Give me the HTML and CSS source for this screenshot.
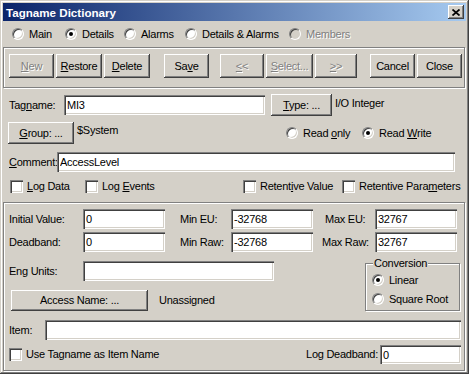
FILE: index.html
```html
<!DOCTYPE html>
<html lang="en">
<head>
    <meta charset="UTF-8">
    <meta name="viewport" content="width=device-width, initial-scale=1.0">
    <title>Tagname Dictionary</title>
    <link rel="stylesheet" href="styles.css">
</head>
<body>
<div class="window">
    <div class="titlebar">
        <span class="title">Tagname Dictionary</span>
        <span class="close-btn">
            <svg width="8" height="7" viewBox="0 0 8 7"><path d="M0.5 0.5L7.5 6.5M7.5 0.5L0.5 6.5" stroke="#000" stroke-width="1.7" fill="none"/></svg>
        </span>
    </div>

    <div class="tabs">
        <div class="opt tab-main"><span class="radio"></span><span>Main</span></div>
        <div class="opt tab-details"><span class="radio checked"></span><span>Details</span></div>
        <div class="opt tab-alarms"><span class="radio"></span><span>Alarms</span></div>
        <div class="opt tab-both"><span class="radio"></span><span>Details &amp; Alarms</span></div>
        <div class="opt disabled"><span class="radio off"></span><span>Members</span></div>
    </div>

    <div class="toolbar">
        <button class="btn w45" disabled><u>N</u>ew</button>
        <button class="btn w46"><u>R</u>estore</button>
        <button class="btn w46"><u>D</u>elete</button>
        <button class="btn w45 sep-save">Sa<u>v</u>e</button>
        <button class="btn w44 sep-nav" disabled><u>&lt;</u>&lt;</button>
        <button class="btn w47" disabled><u>S</u>elect...</button>
        <button class="btn w42" disabled><u>&gt;</u>&gt;</button>
        <button class="btn w45 sep-close">Cancel</button>
        <button class="btn w45">Close</button>
    </div>

    <div class="props">
        <div class="row row-tag">
            <span class="lbl lbl-tag">Tag<u>n</u>ame:</span>
            <input class="field f-tag" value="MI3">
            <button class="btn btn-type"><u>T</u>ype: ...</button>
            <span class="val val-type">I/O Integer</span>
        </div>
        <div class="row row-group">
            <button class="btn btn-group"><u>G</u>roup: ...</button>
            <span class="val val-group">$System</span>
            <div class="opt opt-ro"><span class="radio"></span><span>Read <u>o</u>nly</span></div>
            <div class="opt opt-rw"><span class="radio checked"></span><span>Read <u>W</u>rite</span></div>
        </div>
        <div class="row row-comment">
            <span class="lbl lbl-comment"><u>C</u>omment:</span>
            <input class="field f-comment" value="AccessLevel">
        </div>
        <div class="row row-checks">
            <div class="opt chk-logdata"><span class="check"></span><span><u>L</u>og Data</span></div>
            <div class="opt chk-logevents"><span class="check"></span><span>Log <u>E</u>vents</span></div>
            <div class="opt chk-retval"><span class="check"></span><span>Retent<u>i</u>ve Value</span></div>
            <div class="opt"><span class="check"></span><span>Retentive Para<u>m</u>eters</span></div>
        </div>
    </div>

    <div class="details">
        <div class="row">
            <span class="lbl c1">Initial Value:</span>
            <input class="field num" value="0">
            <span class="lbl c2">Min EU:</span>
            <input class="field num" value="-32768">
            <span class="lbl c3">Max EU:</span>
            <input class="field num" value="32767">
        </div>
        <div class="row row-second">
            <span class="lbl c1">Deadband:</span>
            <input class="field num" value="0">
            <span class="lbl c2">Min Raw:</span>
            <input class="field num" value="-32768">
            <span class="lbl c3 c3-raw">Max Raw:</span>
            <input class="field num" value="32767">
        </div>
        <div class="split">
            <div class="left-col">
                <div class="row">
                    <span class="lbl c1">Eng Units:</span>
                    <input class="field f-eng" value="">
                </div>
                <div class="row row-access">
                    <button class="btn btn-access">Access Name: ...</button>
                    <span class="val val-access">Unassigned</span>
                </div>
            </div>
            <fieldset class="conv">
                <legend>Conversion</legend>
                <div class="opt conv-opt"><span class="radio checked"></span><span>Linear</span></div>
                <div class="opt conv-opt"><span class="radio"></span><span>Square Root</span></div>
            </fieldset>
        </div>
        <div class="row row-item">
            <span class="lbl lbl-item">Item:</span>
            <input class="field f-item" value="">
        </div>
        <div class="row row-last">
            <div class="opt"><span class="check"></span><span>Use Tagname as Item Name</span></div>
            <span class="lbl lbl-logdb">Log Deadband:</span>
            <input class="field f-logdb" value="0">
        </div>
    </div>
</div>
</body>
</html>
```

FILE: styles.css
```css
* {
    box-sizing: border-box;
}
body {
    margin: 0;
    background: #d4d0c8;
    font-family: "Liberation Sans", Arial, sans-serif;
    font-size: 11px;
    letter-spacing: -0.25px;
    line-height: 13px;
    color: #000;
}
u {
    text-decoration: underline;
    text-underline-offset: 1px;
}

/* window frame */
.window {
    width: 469px;
    height: 374px;
    padding: 3px;
    background: #d4d0c8;
    box-shadow: inset -1px -1px #404040, inset 1px 1px #d4d0c8, inset -2px -2px #808080, inset 2px 2px #fff;
    display: flex;
    flex-direction: column;
}
.titlebar {
    height: 18px;
    flex-shrink: 0;
    display: flex;
    align-items: center;
    justify-content: space-between;
    padding: 0 2px 0 3px;
    background: linear-gradient(to right, #0a246a, #a6caf0);
}
.title {
    color: #fff;
    font-weight: bold;
    font-size: 11.6px;
    letter-spacing: 0;
}
.close-btn {
    width: 16px;
    height: 14px;
    display: flex;
    align-items: center;
    justify-content: center;
    background: #d4d0c8;
    box-shadow: inset -1px -1px #404040, inset 1px 1px #fff, inset -2px -2px #808080, inset 2px 2px #d4d0c8;
}

/* radios and checks */
.opt {
    display: flex;
    align-items: center;
    gap: 5px;
    white-space: nowrap;
}
.opt:has(.check) {
    gap: 4px;
}
.radio {
    width: 12px;
    height: 12px;
    flex-shrink: 0;
    border-radius: 50%;
    background: #fff;
    border: 1px solid;
    border-color: #808080 #fff #fff #808080;
    box-shadow: inset 1px 1px #404040, inset -1px -1px #d4d0c8;
    display: flex;
    align-items: center;
    justify-content: center;
}
.radio.checked::after {
    content: "";
    width: 4px;
    height: 4px;
    border-radius: 50%;
    background: #000;
}
.radio.off {
    background: #d4d0c8;
}
.check {
    width: 13px;
    height: 13px;
    flex-shrink: 0;
    background: #fff;
    box-shadow: inset 1px 1px #808080, inset 2px 2px #404040, inset -1px -1px #fff, inset -2px -2px #d4d0c8;
}
.disabled {
    color: #808080;
    text-shadow: 1px 1px #fff;
}

.tabs {
    height: 26px;
    flex-shrink: 0;
    display: flex;
    align-items: center;
    padding-left: 9px;
}
.tab-main { width: 53px; }
.tab-details { width: 59px; }
.tab-alarms { width: 61px; }
.tab-both { width: 104px; }

/* buttons */
.btn {
    height: 24px;
    padding: 0;
    border: none;
    background: #d4d0c8;
    font: inherit;
    letter-spacing: inherit;
    color: #000;
    text-align: center;
    box-shadow: inset -1px -1px #404040, inset 1px 1px #fff, inset -2px -2px #808080, inset 2px 2px #d4d0c8;
}
.btn:disabled {
    color: #808080;
    text-shadow: 1px 1px #fff;
}
.w42 { width: 42px; }
.w44 { width: 44px; }
.w45 { width: 45px; }
.w46 { width: 46px; }
.w47 { width: 47px; }

.toolbar {
    height: 41px;
    flex-shrink: 0;
    margin-right: 1px;
    border: 1px solid #808080;
    box-shadow: inset 1px 1px #fff, 1px 1px #fff;
    padding: 6px 0 0 5px;
    display: flex;
    gap: 2px;
}
.sep-save { margin-left: 12px; }
.sep-nav { margin-left: 9px; }
.sep-close { margin-left: 11px; }

/* fields */
.field {
    height: 20px;
    padding: 0 2px 0 3px;
    border: none;
    outline: none;
    background: #fff;
    font: inherit;
    letter-spacing: inherit;
    color: #000;
    box-shadow: inset 1px 1px #808080, inset 2px 2px #404040, inset -1px -1px #fff, inset -2px -2px #d4d0c8;
}
.row {
    display: flex;
    align-items: center;
}
.lbl {
    flex-shrink: 0;
    white-space: nowrap;
}
.val {
    white-space: nowrap;
}

/* upper properties */
.props {
    flex-shrink: 0;
    padding: 6px 0 9px 6px;
}
.row-tag { height: 22px; }
.lbl-tag { width: 55px; }
.f-tag { width: 201px; }
.btn-type {
    width: 61px;
    height: 22px;
    margin-left: 6px;
}
.val-type {
    align-self: flex-start;
    margin: 3px 0 0 3px;
}
.row-group {
    height: 22px;
    margin-top: 6px;
}
.btn-group {
    width: 66px;
    height: 22px;
    margin-left: -1px;
}
.val-group {
    align-self: flex-start;
    margin: 2px 0 0 3px;
}
.opt-ro {
    width: 76px;
    margin-left: auto;
}
.opt-rw { width: 104px; }
.row-comment {
    height: 20px;
    margin-top: 8px;
}
.lbl-comment { width: 48px; }
.f-comment { width: 398px; }
.row-checks {
    height: 14px;
    margin-top: 7px;
}
.chk-logdata {
    width: 75px;
    margin-left: 1px;
}
.chk-logevents { width: 158px; }
.chk-retval { width: 99px; }

/* lower details panel */
.details {
    flex: 1;
    margin-right: 1px;
    border: 1px solid #808080;
    box-shadow: inset 1px 1px #fff, 1px 1px #fff;
    padding: 6px 0 0 5px;
}
.details > .row {
    height: 20px;
}
.row-second { margin-top: 3px; }
.num { width: 82px; }
.c1 { width: 74px; }
.c2 {
    width: 66px;
    padding-left: 15px;
}
.c3 {
    width: 62px;
    padding-left: 12px;
}
.c3-raw { padding-left: 9px; }

.split {
    display: flex;
    margin-top: 5px;
}
.left-col {
    padding-top: 4px;
}
.left-col .row { height: 20px; }
.f-eng { width: 191px; }
.row-access {
    margin-top: 9px;
}
.left-col .row-access { height: 21px; }
.btn-access {
    width: 137px;
    height: 21px;
    margin-left: 2px;
}
.val-access { margin-left: 11px; }

.conv {
    width: 95px;
    margin: 0 4px 0 auto;
    padding: 0 6px 4px 6px;
    border: 1px solid #808080;
    box-shadow: inset 1px 1px #fff, 1px 1px #fff;
}
.conv legend {
    margin-left: 1px;
    padding: 0 1px;
    line-height: 13px;
    background: #d4d0c8;
}
.conv-opt {
    height: 14px;
    margin-top: 5px;
}
.conv-opt:first-of-type { margin-top: 3px; }

.row-item { margin-top: 9px; }
.lbl-item { width: 36px; }
.f-item { width: 416px; }
.details > .row-last {
    height: 19px;
    margin-top: 5px;
}
.lbl-logdb { margin-left: auto; }
.f-logdb {
    width: 81px;
    height: 19px;
    margin: 0 3px 0 2px;
}
```
